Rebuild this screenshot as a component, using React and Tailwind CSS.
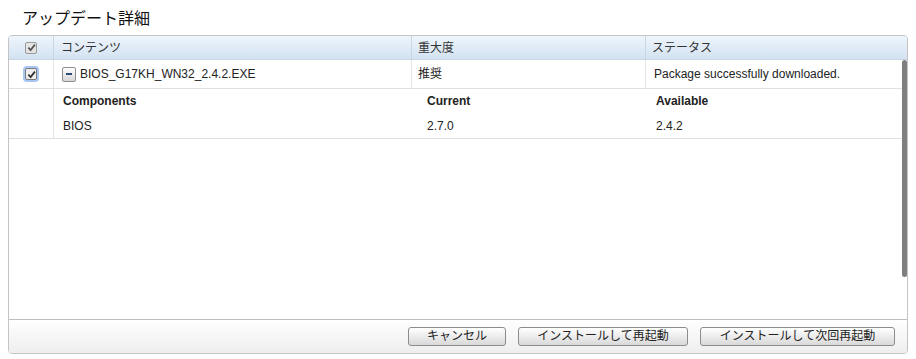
import React from 'react';

const font = { fontFamily: '"Liberation Sans", "Noto Sans CJK JP", sans-serif' };

function Check({ focused, muted }) {
  return (
    <span
      className={`inline-flex items-center justify-center w-[12px] h-[12px] rounded-[2px] border ${
        muted ? 'border-[#9a9a9a] bg-[#e4e4e4]' : 'border-[#7a7a7a] bg-[#eeeeee]'
      } ${focused ? 'ring-2 ring-[#a8c6f2]' : ''}`}
    >
      <svg width="9" height="9" viewBox="0 0 10 10">
        <path d="M1.5 5.2 L4 7.8 L8.8 1.8" fill="none" stroke={muted ? '#555' : '#333'} strokeWidth="2" />
      </svg>
    </span>
  );
}

function Btn({ children, w }) {
  return (
    <button
      className={`${w} h-[19px] rounded-[3px] border border-[#8c8c8c] bg-gradient-to-b from-[#ffffff] to-[#d9d9d9] text-[12px] text-[#222] leading-none flex items-center justify-center`}
    >
      {children}
    </button>
  );
}

export default function App() {
  return (
    <div className="w-[916px] h-[359px] bg-white text-[#222]" style={font}>
      <div className="h-[35px] pl-[22px] pt-[7px] text-[16px] text-[#111]">アップデート詳細</div>

      <div className="ml-[8px] w-[900px] h-[319px] border border-[#c4c4c4] rounded-[4px] flex flex-col overflow-hidden">
        <div className="h-[24px] flex bg-gradient-to-b from-[#eef5fc] to-[#d3e2f1] border-b border-[#c9d6e3] text-[12px] text-[#333]">
          <div className="w-[45px] flex items-center justify-center border-r border-[#c9d6e3]">
            <Check muted />
          </div>
          <div className="w-[358px] flex items-center pl-[7px] border-r border-[#c9d6e3]">コンテンツ</div>
          <div className="w-[234px] flex items-center pl-[6px] border-r border-[#c9d6e3]">重大度</div>
          <div className="flex-1 flex items-center pl-[6px]">ステータス</div>
        </div>

        <div className="flex-1 flex">
          <div className="flex-1 flex flex-col text-[12px]">
            <div className="h-[29px] flex border-b border-[#e0e0e0]">
              <div className="w-[45px] flex items-center justify-center border-r border-[#e4e4e4]">
                <Check focused />
              </div>
              <div className="w-[358px] flex items-center pl-[8px] gap-[4px] border-r border-[#e4e4e4]">
                <span className="w-[14px] h-[15px] rounded-[2px] border border-[#8e8e8e] bg-gradient-to-b from-[#ffffff] to-[#d6d6d6] flex items-center justify-center">
                  <span className="w-[6px] h-[2px] bg-[#2a4a7a]" />
                </span>
                <span>BIOS_G17KH_WN32_2.4.2.EXE</span>
              </div>
              <div className="w-[234px] flex items-center pl-[6px] border-r border-[#e4e4e4]">推奨</div>
              <div className="flex-1 flex items-center pl-[8px]">Package successfully downloaded.</div>
            </div>

            <div className="h-[50px] flex border-b border-[#e0e0e0]">
              <div className="w-[45px] border-r border-[#e4e4e4]" />
              <div className="flex-1 grid grid-cols-[358px_234px_1fr] grid-rows-[24px_25px]">
                <div className="flex items-center pl-[9px] font-bold">Components</div>
                <div className="flex items-center pl-[15px] font-bold">Current</div>
                <div className="flex items-center pl-[10px] font-bold">Available</div>
                <div className="flex items-center pl-[9px]">BIOS</div>
                <div className="flex items-center pl-[15px]">2.7.0</div>
                <div className="flex items-center pl-[10px]">2.4.2</div>
              </div>
            </div>
          </div>

          <div className="w-[5px] pb-[42px]">
            <div className="h-full rounded-full bg-[#7f7f7f]" />
          </div>
        </div>

        <div className="h-[34px] border-t border-[#bdbdbd] bg-gradient-to-b from-[#ffffff] to-[#eeeeee] flex items-center justify-end gap-[12px] pr-[12px] pb-[1px]">
          <Btn w="w-[98px]">キャンセル</Btn>
          <Btn w="w-[170px]">インストールして再起動</Btn>
          <Btn w="w-[195px]">インストールして次回再起動</Btn>
        </div>
      </div>
    </div>
  );
}
